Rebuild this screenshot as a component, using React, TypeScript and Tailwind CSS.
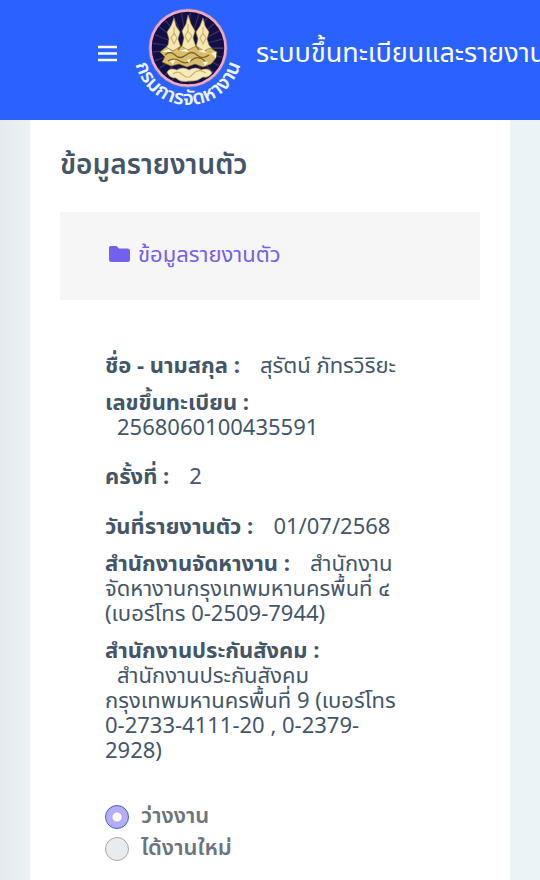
import { useState } from 'react'
import type { ReactNode } from 'react'

function DepartmentLogo() {
  return (
    <svg viewBox="0 0 112 112" className="h-28 w-28 shrink-0 overflow-visible" role="img" aria-label="กรมการจัดหางาน">
      <defs>
        <path id="arc" d="M 2 30 L 2 52 A 54 53 0 0 0 110 52 L 110 30" />
      </defs>
      <circle cx="56" cy="48" r="39.5" fill="#8a7fb8" />
      <circle cx="56" cy="48" r="37.5" fill="#120f45" stroke="#f0a9c0" strokeWidth="2.5" />
      <circle cx="56" cy="48" r="28" fill="none" stroke="#3a3470" strokeWidth="15" strokeDasharray="1 6" />
      {/* Trois flammes */}
      <g fill="#f5e8b4" stroke="#a98a45" strokeWidth="0.6">
        <path d="M56 15 L59 24 L63 31 L61 38 L65 50 H49 L52 38 L50 31 L54 24 Z" />
        <path d="M42 18 L44 26 L48 32 L46 39 L50 51 H31 L36 45 L37 39 L35 32 L39 26 Z" />
        <path d="M71 18 L73 26 L77 32 L75 39 L77 45 L82 51 H63 L66 39 L64 32 L68 26 Z" />
      </g>
      <g fill="#d9bf6a" stroke="#8b6c2a" strokeWidth="0.6">
        <path d="M28 52 L34 47 L41 51 L49 46 L56 50 L64 46 L72 51 L78 48 L85 52 L84 58 L79 64 L71 67 L63 64 L55 67 L47 64 L39 66 L30 62 L33 57 Z" />
      </g>
      <path d="M35 72 Q38 67 45 70 Q51 66 57 70 Q64 66 69 70 Q77 67 80 73 Q77 78 71 77 Q65 82 57 81 Q49 83 44 78 Q37 78 35 72 Z" fill="#f7ebbd" stroke="#b69a55" strokeWidth="0.6" />
      <g fill="none" stroke="#d2b566" strokeWidth="1.2">
        <path d="M56 24 V31 L53 36 L56 42 L60 36 L56 31 M42 27 V33 L39 38 L42 44 L45 38 L42 33 M71 27 V33 L68 38 L71 44 L74 38 L71 33" />
        <path d="M41 74 Q46 70 51 75 T61 74 T74 73" />
      </g>
      <g fill="none" stroke="#79602a" strokeWidth="1.2">
        <path d="M33 55 Q38 50 43 55 T54 55 T65 55 T77 55 M36 61 Q42 57 48 61 T60 60 T73 61" />
        <path d="M49 46 l-3 4 M64 46 l3 4" />
      </g>
      <path d="M38 61 l5 -1 l-2 5 Z M55 60 l4 -1 l-2 4 Z M79 53 l5 -1 l0 6 Z M71 62 l5 0 l-3 4 Z M30 52 l6 -3 l4 3 Z M48 51 l6 -2 l3 3 Z M66 51 l6 -1 l2 3 Z" fill="#fffdf0" />
      <text className="text-[20px] font-semibold" fill="#eef4ff">
        <textPath href="#arc" startOffset="50%" textAnchor="middle">กรมการจัดหางาน</textPath>
      </text>
    </svg>
  )
}

function Field({ label, children }: { label: string; children: ReactNode }) {
  return (
    <div>
      <dt className="inline font-bold">{label} :</dt>
      <dd className="inline">{children}</dd>
    </div>
  )
}

export default function App() {
  const [status, setStatus] = useState('free')

  const options = [
    { value: 'free', label: 'ว่างงาน' },
    { value: 'new', label: 'ได้งานใหม่' },
  ]

  return (
    <div className="min-h-screen flex flex-col overflow-hidden bg-[#ebf3f7] font-['Noto_Sans_Thai','Prompt','Noto_Sans',sans-serif] text-[#435669]">
      <header className="flex h-[120px] shrink-0 items-start bg-[#2962ff] pl-24 text-white">
        <button type="button" aria-label="เมนู" className="mt-[41px] flex h-6 w-6 shrink-0 items-center justify-center">
          <svg viewBox="0 0 24 24" className="h-6 w-6" stroke="currentColor" strokeWidth="2.4">
            <path d="M2 6h19M2 12.5h19M2 19h19" />
          </svg>
        </button>
        <div className="ml-3 shrink-0">
          <DepartmentLogo />
        </div>
        <h1 className="ml-3 mt-[34px] whitespace-nowrap text-[27px] leading-10">ระบบขึ้นทะเบียนและรายงานตัว</h1>
      </header>

      <div className="flex flex-1 bg-linear-to-r from-[#e4eaee] to-[#ebf3f7] to-[30px] px-[30px]">
        <main className="flex-1 bg-white px-[30px] pt-6 pb-5">
          <h2 className="text-[28px] font-semibold leading-[44px]">ข้อมูลรายงานตัว</h2>

          <nav className="mt-6 flex h-22 items-center bg-[#f6f6f6] px-12">
            <a href="#report" className="flex items-center gap-2 text-[22px] leading-8 text-[#7460ee]">
              <svg viewBox="0 0 22 20" className="h-5 w-[22px]" fill="currentColor">
                <path d="M2.5 0h6L11 2.5h8.5A2.5 2.5 0 0 1 22 5v9a2 2 0 0 1-2 2H3a2 2 0 0 1-2-2V1.5A1.5 1.5 0 0 1 2.5 0Z" />
              </svg>
              ข้อมูลรายงานตัว
            </a>
          </nav>

          <section id="report" className="px-[45px] pt-[54px]">
            <dl className="flex flex-col gap-3 text-[22px] leading-[25px]">
              <Field label="ชื่อ - นามสกุล"><span className="ml-5">สุรัตน์ ภัทรวิริยะ</span></Field>
              <Field label="เลขขึ้นทะเบียน"><br /><span className="ml-3">2568060100435591</span></Field>
              <div className="mt-3 flex flex-col gap-[25px]">
                <Field label="ครั้งที่"><span className="ml-5">2</span></Field>
                <Field label="วันที่รายงานตัว"><span className="ml-5">01/07/2568</span></Field>
              </div>
              <Field label="สำนักงานจัดหางาน">
                <span className="ml-5">สำนักงาน</span>
                <br />จัดหางานกรุงเทพมหานครพื้นที่ ๔
                <br />(เบอร์โทร 0-2509-7944)
              </Field>
              <Field label="สำนักงานประกันสังคม">
                <br /><span className="ml-3">สำนักงานประกันสังคม</span>
                <br />กรุงเทพมหานครพื้นที่ 9 (เบอร์โทร
                <br />0-2733-4111-20 , 0-2379-
                <br />2928)
              </Field>
            </dl>

            <fieldset className="mt-[37px] flex flex-col text-[22px] font-semibold leading-8 text-[#6c757d]">
              {options.map(({ value, label }) => (
                <label key={value} className="flex items-center gap-3">
                  <input
                    type="radio"
                    name="status"
                    value={value}
                    checked={status === value}
                    onChange={() => setStatus(value)}
                    className="h-6 w-6 appearance-none rounded-full border border-[#a4a9ae] bg-[#e9ecef] checked:border-[#3f62d8] checked:bg-[radial-gradient(circle,#fff_4px,#b8acf5_5px)]"
                  />
                  {label}
                </label>
              ))}
            </fieldset>
          </section>
        </main>
      </div>
    </div>
  )
}
